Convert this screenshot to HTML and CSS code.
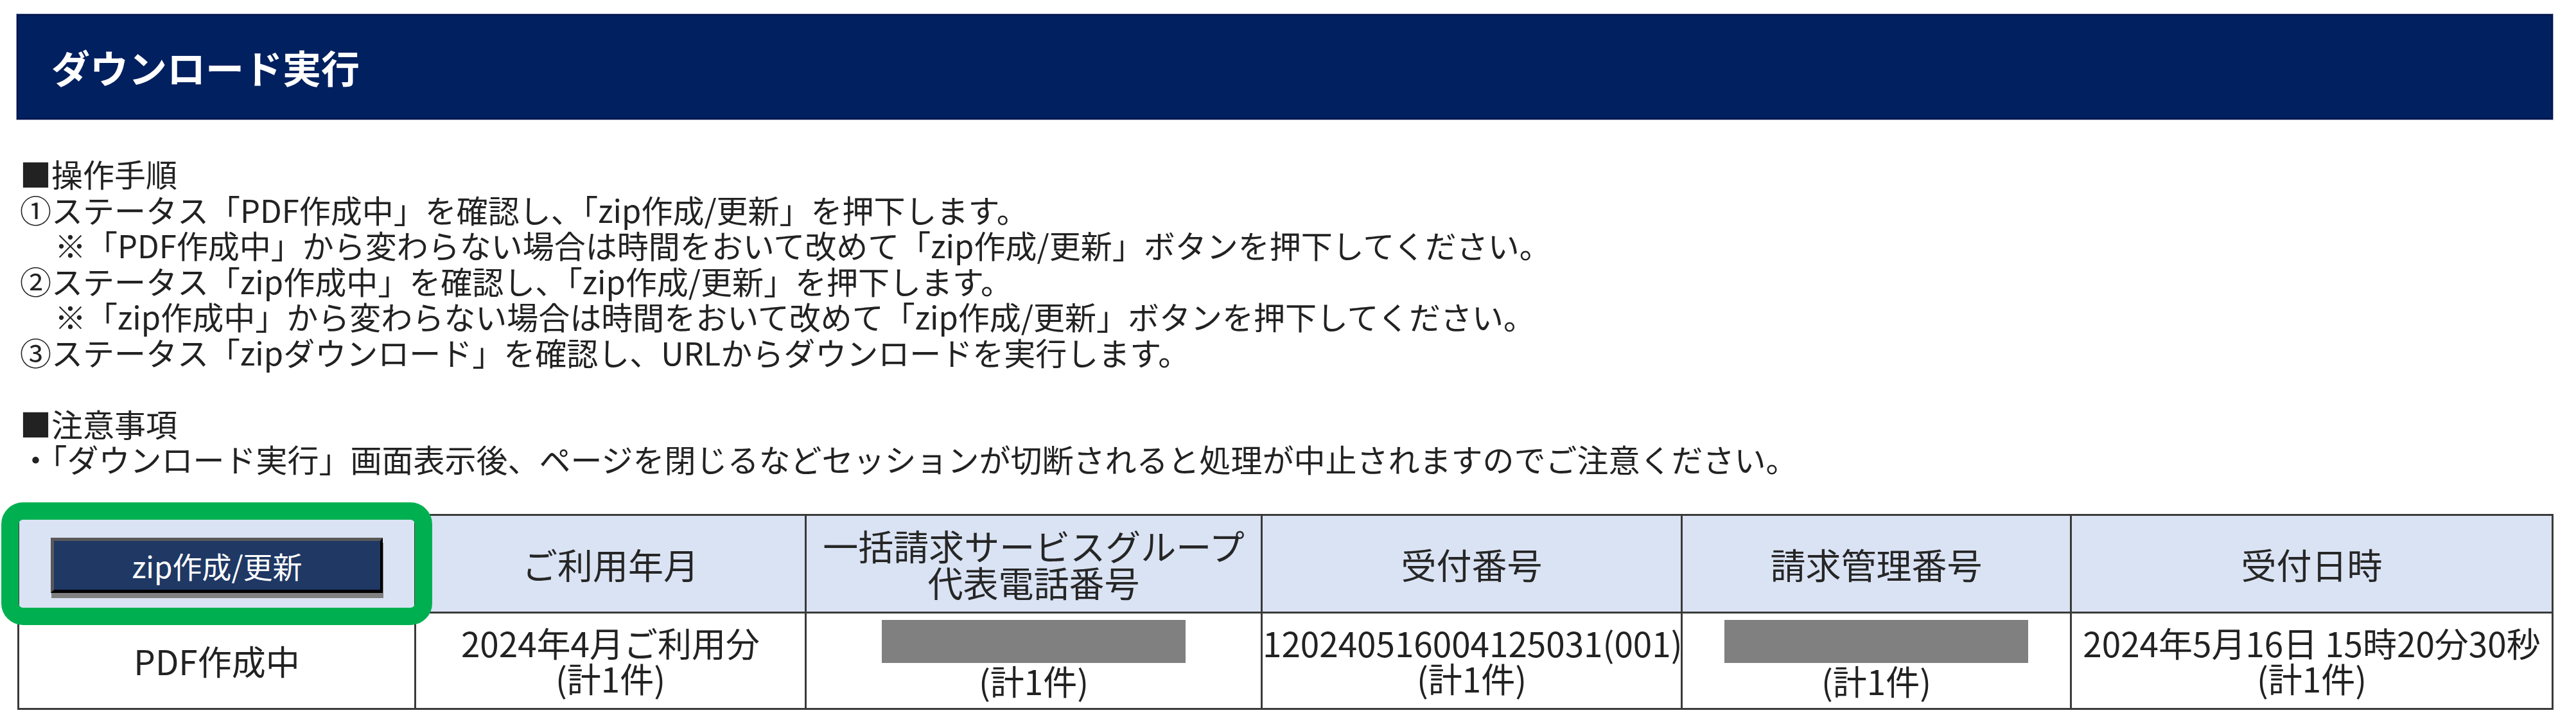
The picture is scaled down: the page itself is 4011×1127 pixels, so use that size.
FILE: index.html
```html
<!DOCTYPE html>
<html lang="ja">
<head>
<meta charset="utf-8">
<title>ダウンロード実行</title>
<link rel="stylesheet" href="styles.css">
</head>
<body>
<div class="page">
  <div class="titlebar"><h1 class="title">ダウンロード実行</h1></div>

  <div class="guide">
    <p class="line">■操作手順</p>
    <p class="line">①ステータス「PDF作成中」を確認し、「zip作成/更新」を押下します。</p>
    <p class="line note">※「PDF作成中」から変わらない場合は時間をおいて改めて「zip作成/更新」ボタンを押下してください。</p>
    <p class="line">②ステータス「zip作成中」を確認し、「zip作成/更新」を押下します。</p>
    <p class="line note">※「zip作成中」から変わらない場合は時間をおいて改めて「zip作成/更新」ボタンを押下してください。</p>
    <p class="line">③ステータス「zipダウンロード」を確認し、URLからダウンロードを実行します。</p>
    <p class="line blank"></p>
    <p class="line">■注意事項</p>
    <p class="line">・「ダウンロード実行」画面表示後、ページを閉じるなどセッションが切断されると処理が中止されますのでご注意ください。</p>
  </div>

  <div class="table-wrap">
    <table class="result">
      <colgroup>
        <col class="c1"><col class="c2"><col class="c3"><col class="c4"><col class="c5"><col class="c6">
      </colgroup>
      <thead>
        <tr>
          <th class="btn-cell"><button class="zip-btn" type="button">zip作成/更新</button></th>
          <th>ご利用年月</th>
          <th>一括請求サービスグループ<br>代表電話番号</th>
          <th>受付番号</th>
          <th>請求管理番号</th>
          <th>受付日時</th>
        </tr>
      </thead>
      <tbody>
        <tr>
          <td>PDF作成中</td>
          <td>2024年4月ご利用分<br>(計1件)</td>
          <td><div class="redact"></div>(計1件)</td>
          <td>120240516004125031(001)<br>(計1件)</td>
          <td><div class="redact"></div>(計1件)</td>
          <td>2024年5月16日 15時20分30秒<br>(計1件)</td>
        </tr>
      </tbody>
    </table>
    <div class="highlight"></div>
  </div>
</div>
</body>
</html>
```

FILE: styles.css
```css
html, body {
  margin: 0;
  padding: 0;
  background: #ffffff;
}

body {
  font-family: "Noto Sans CJK JP", "Noto Sans", sans-serif;
  color: #222222;
}

.page {
  width: 4011px;
}

.titlebar {
  box-sizing: border-box;
  margin: 21px 0 0 25px;
  width: 3951px;
  height: 166px;
  background: #00205f;
  border: 1px solid #9aa8c6;
  box-shadow: inset 0 0 0 2px #001249;
  display: flex;
  align-items: center;
  padding-left: 54px;
}

.title {
  margin: 0;
  font-size: 60px;
  font-weight: 700;
  color: #ffffff;
  line-height: 1;
}

.guide {
  margin-top: 55px;
  padding-left: 31px;
}

.line {
  margin: 0;
  font-size: 49px;
  line-height: 55.5px;
  height: 55.5px;
  white-space: nowrap;
  color: #222222;
}

.note {
  padding-left: 54px;
}

.table-wrap {
  position: relative;
  margin: 58px 0 0 27px;
  width: 3946px;
}

.result {
  width: 3946px;
  table-layout: fixed;
  border-collapse: collapse;
  border: 3px solid #3a3a3a;
}

.c1 { width: 618px; }
.c2 { width: 608px; }
.c3 { width: 710px; }
.c4 { width: 654px; }
.c5 { width: 606px; }
.c6 { width: 750px; }

.result th,
.result td {
  border: 3px solid #3a3a3a;
  padding: 0;
  text-align: center;
  vertical-align: middle;
  white-space: nowrap;
}

.result th {
  height: 149px;
  background: #dae3f3;
  font-size: 55px;
  font-weight: 400;
  line-height: 57px;
  color: #262626;
}

.result td {
  height: 147px;
  background: #ffffff;
  font-size: 53px;
  line-height: 55px;
  color: #222222;
}

.zip-btn {
  display: block;
  box-sizing: border-box;
  margin: 6px auto 0;
  width: 517px;
  height: 86px;
  padding: 0;
  background: #1f3864;
  color: #ffffff;
  font-family: "Noto Sans CJK JP", "Noto Sans", sans-serif;
  font-size: 46px;
  line-height: 1;
  border-style: solid;
  border-width: 5px 4px 5px 5px;
  border-color: #595959 #000000 #000000 #595959;
  box-shadow: 1px 8px 0 #808080;
  cursor: pointer;
}

.redact {
  width: 473px;
  height: 67px;
  margin: -4px auto 0;
  background: #808080;
}

.highlight {
  position: absolute;
  left: -25px;
  top: -18px;
  width: 671px;
  height: 191px;
  box-sizing: border-box;
  border: 27px solid #00b050;
  border-radius: 34px;
  pointer-events: none;
}
```
